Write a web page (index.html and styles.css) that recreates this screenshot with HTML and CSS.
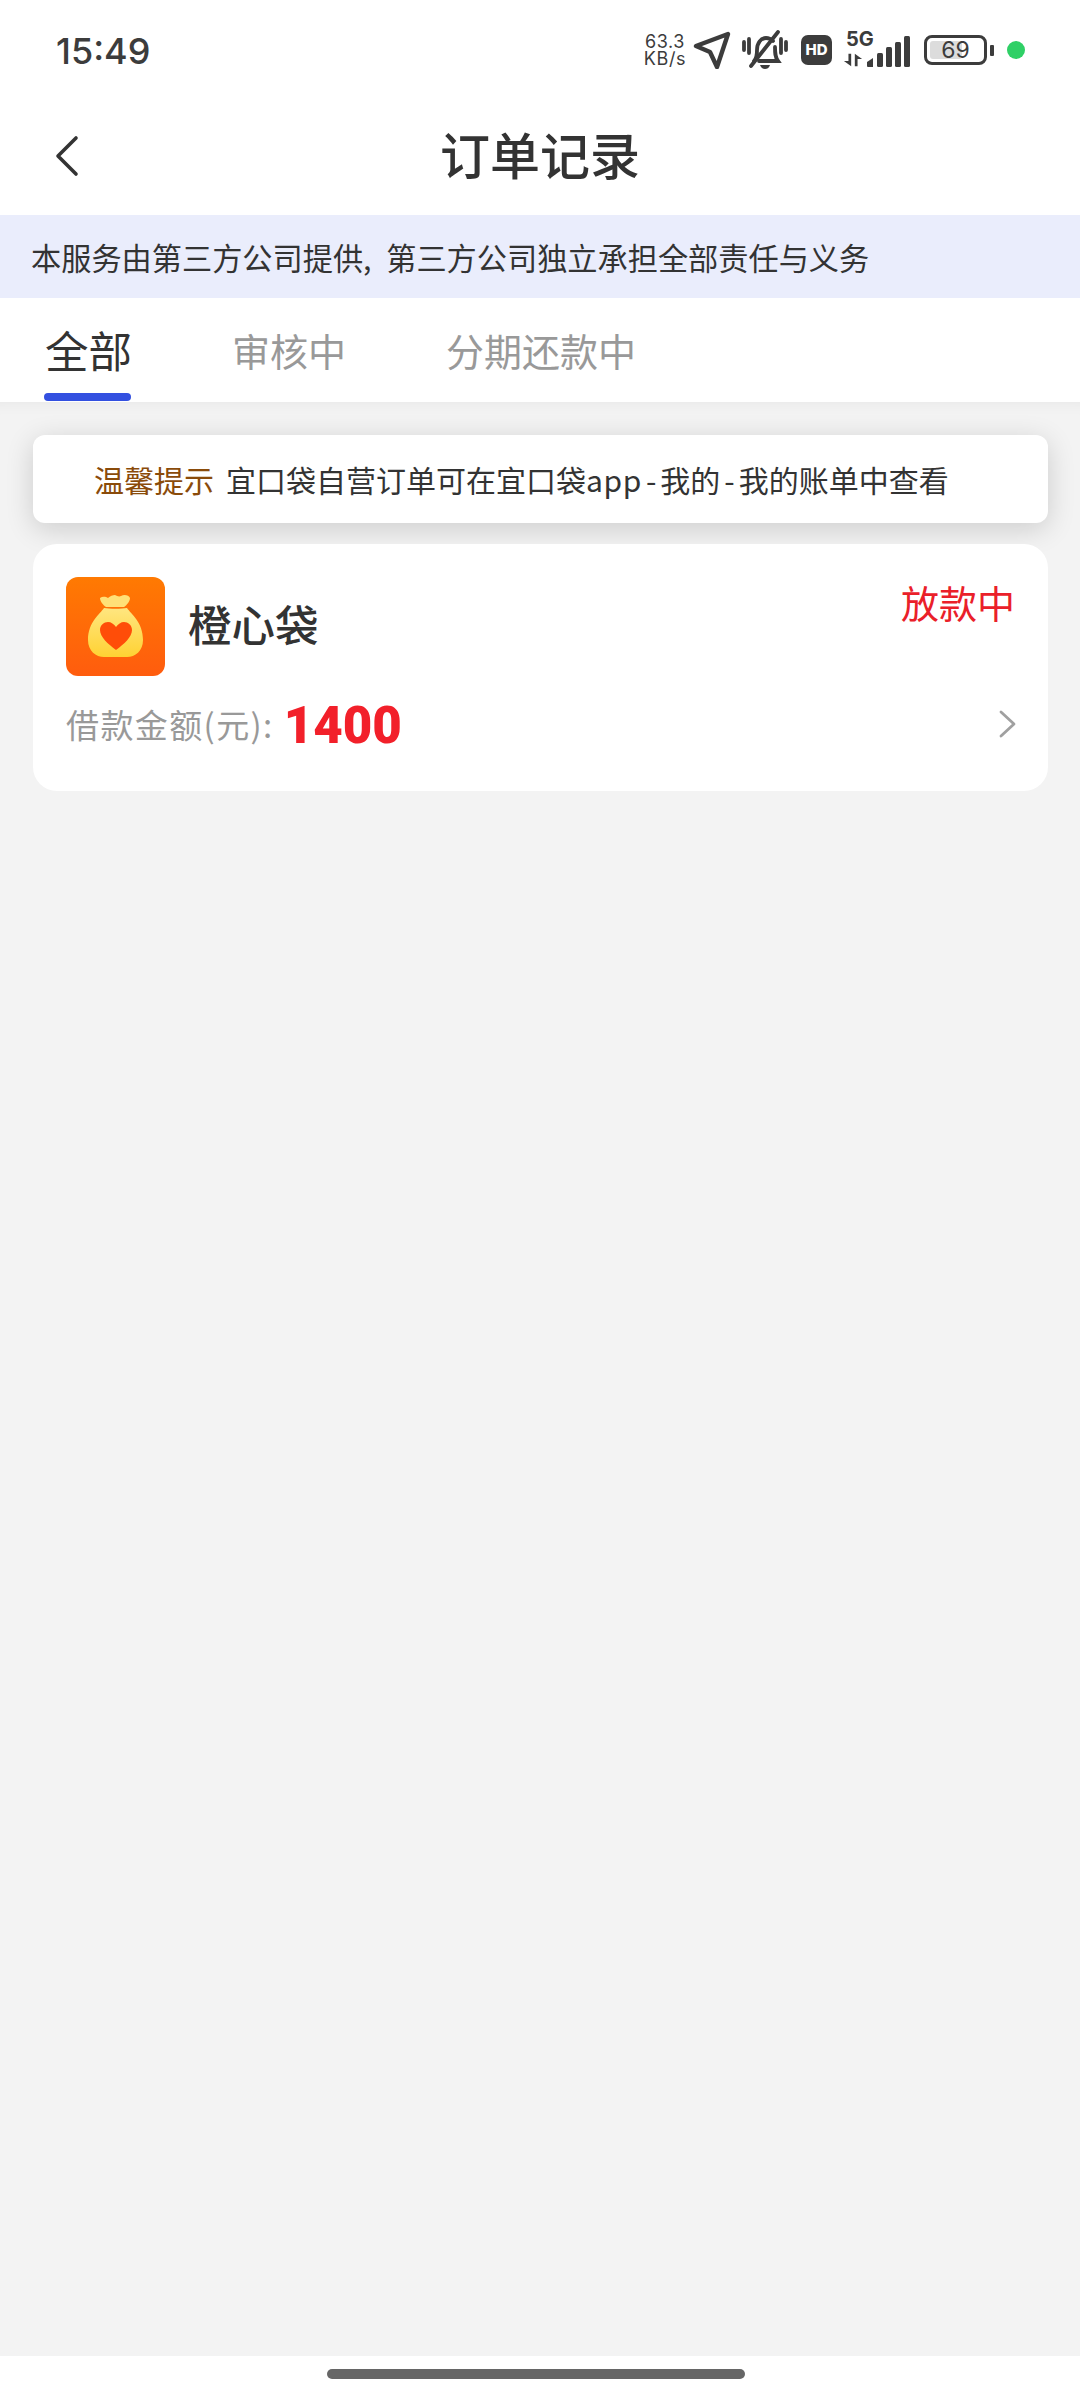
FILE: index.html
```html
<!DOCTYPE html>
<html lang="zh">
<head>
<meta charset="utf-8">
<title>订单记录</title>
<link rel="stylesheet" href="styles.css">
</head>
<body>
<div class="page">
  <div class="status">
    <span class="time">15:49</span>
    <div class="status-icons">
      <div class="speed"><span>63.3</span><span>KB/s</span></div>
      <svg class="ic-nav" viewBox="0 0 38 38"><path d="M3 15 35 3 24 36 17 21Z" fill="none" stroke="#3c3c3c" stroke-width="4.4" stroke-linejoin="round"/></svg>
      <svg class="ic-bell" viewBox="0 0 46 40"><g fill="none" stroke="#3c3c3c" stroke-width="3.8" stroke-linecap="round"><path d="M2 12v8M7 9v14M44 12v8M39 9v14"/><path d="M12 31c3-3 3-6 3-11 0-7 4-12 9-12 3 0 5 1 7 3"/><path d="M33 17c0 6 0 10 3 14H17"/><path d="M36 2 9 36"/></g><path d="M18 35h10c-1 3-3 4-5 4s-4-1-5-4Z" fill="#3c3c3c"/></svg>
      <div class="hd">HD</div>
      <div class="net">
        <span class="net-label">5G</span>
        <svg class="ic-arrows" viewBox="0 0 22 14"><path d="M6 0h3v14L1 8h5ZM13 0l8 6h-5v8h-3Z" fill="#3c3c3c"/></svg>
        <svg class="ic-bars" viewBox="0 0 44 31"><g fill="#3c3c3c"><path d="M0 26 6 22v9H1a1 1 0 0 1-1-1Z"/><rect x="10" y="17" width="6" height="14" rx="1.5"/><rect x="19" y="11" width="6" height="20" rx="1.5"/><rect x="28" y="6" width="6" height="25" rx="1.5"/><rect x="37" y="0" width="6" height="31" rx="1.5"/></g></svg>
      </div>
      <div class="battery">
        <div class="battery-body"><div class="battery-fill"></div><span class="battery-num">69</span></div>
        <div class="battery-cap"></div>
      </div>
      <div class="dot"></div>
    </div>
  </div>

  <header class="nav">
    <svg class="back" viewBox="0 0 26 42"><path d="M22 3 4 21l18 18" fill="none" stroke="#333" stroke-width="3.6" stroke-linecap="round" stroke-linejoin="round"/></svg>
    <h1 class="title">订单记录</h1>
  </header>

  <div class="notice">本服务由第三方公司提供, 第三方公司独立承担全部责任与义务</div>

  <nav class="tabs">
    <div class="tab tab-active">全部</div>
    <div class="tab">审核中</div>
    <div class="tab">分期还款中</div>
  </nav>

  <main class="content">
    <div class="tip"><span class="tip-label">温馨提示</span><span class="tip-text">宜口袋自营订单可在宜口袋<span class="latin">app</span><span class="dash">-</span>我的<span class="dash">-</span>我的账单中查看</span></div>

    <article class="card">
      <div class="card-top">
        <svg class="logo" viewBox="0 0 99 99">
          <defs>
            <linearGradient id="bg" x1="0" y1="0" x2="0" y2="1"><stop offset="0" stop-color="#ff7a02"/><stop offset="1" stop-color="#ff5c0e"/></linearGradient>
            <linearGradient id="bag" x1="0" y1="0" x2="0" y2="1"><stop offset="0" stop-color="#ffe680"/><stop offset="1" stop-color="#ffd233"/></linearGradient>
          </defs>
          <rect width="99" height="99" rx="12" fill="url(#bg)"/>
          <path d="M34 21c3-2 6-1 8 0 2-2 5-3 7-3 2 1 4 2 6 1 3-2 8-1 9 2 0 3-3 7-6 9H40c-3-2-6-6-6-9Z" fill="#ffe077"/>
          <path d="M38 31c5 1 18 1 23 0 4 6 16 14 16 32 0 11-8 17-16 17H38c-8 0-16-6-16-17 0-18 12-26 16-32Z" fill="url(#bag)"/>
          <path d="M50 73C42 67 34 60 34 53c0-5 4-8 8-8 3 0 6 2 8 5 2-3 5-5 8-5 4 0 8 3 8 8 0 7-8 14-16 20Z" fill="#ff4d08"/>
        </svg>
        <span class="name">橙心袋</span>
        <span class="state">放款中</span>
      </div>
      <div class="card-bottom">
        <span class="amount-label">借款金额(元):</span>
        <span class="amount">1400</span>
        <svg class="chev" viewBox="0 0 18 28"><path d="M2 2l13 12L2 26" fill="none" stroke="#a0a0a0" stroke-width="2.8" stroke-linecap="round" stroke-linejoin="round"/></svg>
      </div>
    </article>
  </main>

  <div class="home"><div class="home-bar"></div></div>
</div>
</body>
</html>
```
FILE: styles.css
```css
* { box-sizing: border-box; }
html, body { margin: 0; padding: 0; }
body { font-family: "Noto Sans CJK SC", "Noto Sans", sans-serif; background: #fff; color: #333; }
.page { width: 1080px; height: 2400px; display: flex; flex-direction: column; background: #fff; overflow: hidden; }

.status { height: 100px; flex: none; display: flex; align-items: center; justify-content: space-between; padding: 0 55px 0 56px; color: #3c3c3c; }
.time { font-family: "Inter", "Noto Sans", sans-serif; font-size: 36px; font-weight: 500; position: relative; top: 1px; }
.status-icons { display: flex; align-items: center; }
.speed { display: flex; flex-direction: column; align-items: center; font-family: "Inter", sans-serif; font-size: 18px; line-height: 17px; letter-spacing: 0.6px; width: 44px; }
.ic-nav { width: 38px; height: 38px; margin-left: 6px; }
.ic-bell { width: 46px; height: 40px; margin-left: 11px; }
.hd { width: 31px; height: 30px; margin-left: 13px; border-radius: 7px; background: #3c3c3c; color: #fff; font-family: "Inter", sans-serif; font-size: 15px; font-weight: 800; line-height: 30px; text-align: center; }
.net { position: relative; width: 68px; height: 34px; margin-left: 11px; }
.net-label { position: absolute; left: 3px; top: -4px; font-family: "Inter", sans-serif; font-size: 20px; font-weight: 700; line-height: 20px; }
.ic-arrows { position: absolute; left: 0; bottom: 0; width: 20px; height: 14px; }
.ic-bars { position: absolute; right: 0; bottom: 0; width: 44px; height: 31px; }
.battery { display: flex; align-items: center; margin-left: 13px; }
.battery-body { position: relative; width: 63px; height: 30px; border: 3px solid #3c3c3c; border-radius: 8px; padding: 3px; }
.battery-fill { width: 62%; height: 100%; background: #dcdcdc; border-radius: 3px; }
.battery-num { position: absolute; left: 0; right: 0; top: -3px; text-align: center; font-family: "Inter", sans-serif; font-size: 23px; line-height: 30px; }
.battery-cap { width: 4px; height: 11px; margin-left: 3px; background: #3c3c3c; border-radius: 1px; }
.dot { width: 18px; height: 18px; margin-left: 13px; border-radius: 50%; background: #2fd066; }

.nav { height: 115px; flex: none; position: relative; display: flex; align-items: center; justify-content: center; padding-bottom: 9px; }
.back { position: absolute; left: 54px; top: 35px; width: 26px; height: 42px; }
.title { margin: 0; font-size: 50px; font-weight: 500; line-height: 60px; color: #333; }

.notice { height: 83px; flex: none; display: flex; align-items: center; padding-left: 31px; background: #eaedfc; font-size: 30.2px; word-spacing: 8px; color: #333; }

.tabs { height: 104px; flex: none; display: flex; align-items: center; background: #fff; padding-left: 45px; }
.tab { font-size: 38px; line-height: 50px; color: #999; margin-right: 100px; }
.tab-active { position: relative; font-size: 43.5px; color: #333; }
.tab-active::after { content: ""; position: absolute; left: -1px; right: 1px; bottom: -26px; height: 8px; border-radius: 4px; background: #3350e0; }

.content { flex: 1; display: flex; flex-direction: column; gap: 21px; padding: 33px 32px 0 33px; background: #f3f3f3; box-shadow: inset 0 14px 16px -14px rgba(0,0,0,.06); }
.tip { height: 88px; display: flex; align-items: center; padding-left: 61px; border-radius: 12px; background: #fff; box-shadow: 0 6px 28px rgba(0,0,0,.16); font-size: 30px; }
.tip-label { color: #8a4b0a; margin-right: 12px; }
.tip-text { color: #333; }
.latin { letter-spacing: 0.6px; }
.dash { padding: 0 4px; }

.card { height: 247px; padding: 33px 33px 0 33px; border-radius: 24px; background: #fff; }
.card-top { position: relative; display: flex; align-items: center; }
.logo { width: 99px; height: 99px; flex: none; }
.name { margin-left: 23px; font-size: 43.5px; font-weight: 500; color: #333; position: relative; top: -3px; }
.state { position: absolute; right: 0; top: 0; font-size: 38px; line-height: 50px; color: #ea2029; }
.card-bottom { display: flex; align-items: center; margin-top: 18px; position: relative; }
.amount-label { font-size: 33px; color: #999; letter-spacing: 1.4px; }
.amount { margin-left: 10px; font-family: "Roboto", sans-serif; font-size: 51px; font-weight: 900; line-height: 60px; color: #f2202a; position: relative; top: 2px; }
.chev { position: absolute; right: -2px; top: 16px; width: 18px; height: 28px; }

.home { height: 44px; flex: none; background: #fff; padding: 13px 0 0 327px; }
.home-bar { width: 418px; height: 10px; border-radius: 5px; background: #666; }
```
